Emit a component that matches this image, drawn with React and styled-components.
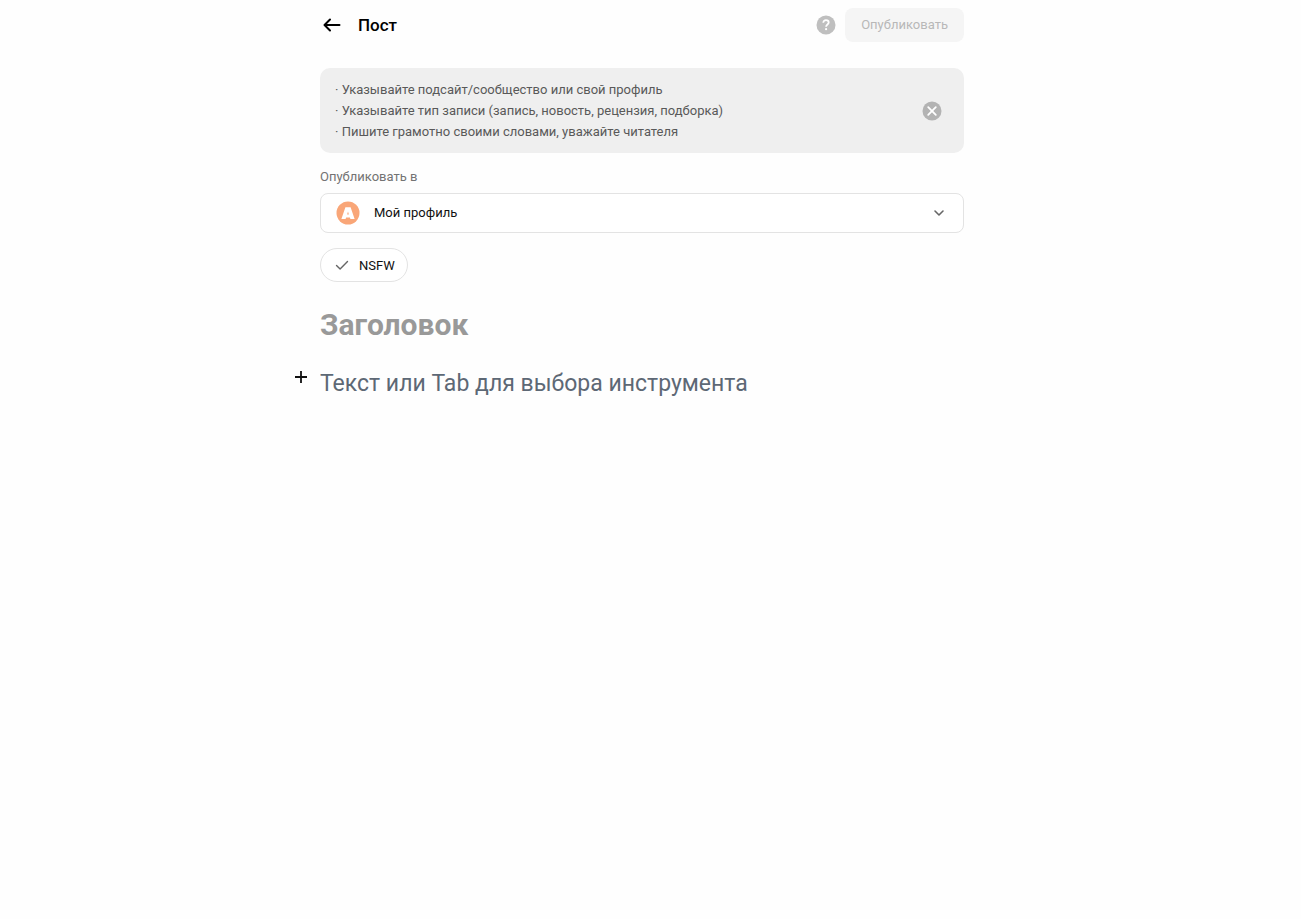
import React, { useState } from "react";
import styled, { createGlobalStyle } from "styled-components";

function App() {
  const [noticeOpen, setNoticeOpen] = useState(true);
  const [nsfw, setNsfw] = useState(false);

  return (
    <>
      <GlobalStyle />
      <Page>
        <Header>
          <IconButton type="button" aria-label="Назад">
            <BackIcon />
          </IconButton>
          <PageTitle>Пост</PageTitle>
          <IconButton type="button" aria-label="Помощь">
            <HelpIcon />
          </IconButton>
          <PublishButton type="button" disabled>
            Опубликовать
          </PublishButton>
        </Header>

        {noticeOpen && (
          <Notice>
            <Rules>
              {rules.map((rule) => (
                <li key={rule}>· {rule}</li>
              ))}
            </Rules>
            <IconButton
              type="button"
              aria-label="Закрыть"
              onClick={() => setNoticeOpen(false)}
            >
              <CloseIcon />
            </IconButton>
          </Notice>
        )}

        <FieldLabel htmlFor="target">Опубликовать в</FieldLabel>
        <SelectBox>
          <AvatarIcon />
          <Select id="target" defaultValue="profile">
            <option value="profile">Мой профиль</option>
          </Select>
          <ChevronIcon />
        </SelectBox>

        <Chip>
          <ChipInput
            type="checkbox"
            checked={nsfw}
            onChange={(e) => setNsfw(e.target.checked)}
          />
          <CheckIcon />
          NSFW
        </Chip>

        <TitleInput placeholder="Заголовок" aria-label="Заголовок" />

        <Editor>
          <IconButton type="button" aria-label="Добавить блок">
            <PlusIcon />
          </IconButton>
          <TextInput
            rows={1}
            placeholder="Текст или Tab для выбора инструмента"
            aria-label="Текст"
          />
        </Editor>
      </Page>
    </>
  );
}

const rules = [
  "Указывайте подсайт/сообщество или свой профиль",
  "Указывайте тип записи (запись, новость, рецензия, подборка)",
  "Пишите грамотно своими словами, уважайте читателя",
];

// icon
const BackIcon = () => (
  <svg width="24" height="20" viewBox="0 0 24 20" fill="none">
    <path
      d="M19.5 10H5M10 4.5L4.5 10l5.5 5.5"
      stroke="#000"
      strokeWidth="2"
      strokeLinecap="round"
      strokeLinejoin="round"
    />
  </svg>
);

const HelpIcon = () => (
  <svg width="20" height="20" viewBox="0 0 20 20" fill="none">
    <circle cx="10" cy="10" r="9.5" fill="#bfbfbf" />
    <path
      d="M7.3 7.8c0-1.6 1.1-2.6 2.7-2.6s2.7 1 2.7 2.4c0 1.9-2.6 2-2.6 4.2"
      stroke="#fff"
      strokeWidth="1.8"
    />
    <circle cx="10.1" cy="14.2" r="1.1" fill="#fff" />
  </svg>
);

const CloseIcon = () => (
  <svg width="20" height="20" viewBox="0 0 20 20" fill="none">
    <circle cx="10" cy="10" r="9.5" fill="#b3b3b3" />
    <path
      d="M6.2 6.2l7.6 7.6M13.8 6.2l-7.6 7.6"
      stroke="#fff"
      strokeWidth="1.8"
      strokeLinecap="round"
    />
  </svg>
);

const AvatarIcon = () => (
  <svg width="24" height="24" viewBox="0 0 24 24">
    <circle cx="12" cy="12" r="11.5" fill="#f9a678" />
    <path
      d="M9.4 6.3h5.2L18.6 18h-4.2l-.5-1.6h-3.8L9.6 18H5.4zM12 10.4l-.9 3.2h1.8z"
      fill="#fff"
      fillRule="evenodd"
    />
  </svg>
);

const ChevronIcon = () => (
  <svg width="12" height="12" viewBox="0 0 12 12" fill="none">
    <path
      d="M2 4l4 4 4-4"
      stroke="#666"
      strokeWidth="1.6"
      strokeLinecap="round"
      strokeLinejoin="round"
    />
  </svg>
);

const CheckIcon = () => (
  <svg width="14" height="12" viewBox="0 0 14 12" fill="none">
    <path
      d="M1.5 6.5l3.6 3.6 7.4-7.6"
      stroke="#666"
      strokeWidth="1.4"
      strokeLinecap="round"
      strokeLinejoin="round"
    />
  </svg>
);

const PlusIcon = () => (
  <svg width="12" height="12" viewBox="0 0 12 12">
    <path d="M6 0v12M0 6h12" stroke="#111" strokeWidth="1.8" />
  </svg>
);

const GlobalStyle = createGlobalStyle`
  * {
    box-sizing: border-box;
  }
  body {
    margin: 0;
    padding-right: 17px;
    background: #fefefe;
    color: #111;
    font-family: Roboto, "Liberation Sans", sans-serif;
    font-size: 13px;
  }
  button, input, select, textarea {
    font-family: inherit;
    font-size: inherit;
  }
`;

const Page = styled.main`
  display: flex;
  flex-direction: column;
  max-width: 644px;
  margin: 0 auto;
`;

const Header = styled.header`
  display: flex;
  align-items: center;
  padding: 8px 0 10px;
`;

const IconButton = styled.button`
  display: flex;
  flex-shrink: 0;
  padding: 0;
  border: 0;
  background: none;
  cursor: pointer;
`;

const PageTitle = styled.h1`
  flex: 1;
  margin: 0 0 0 14px;
  color: #000;
  font-size: 17px;
  font-weight: 500;
  line-height: 24px;
`;

const PublishButton = styled.button`
  height: 34px;
  margin-left: 9px;
  padding: 0 16px 2px;
  border: 0;
  border-radius: 8px;
  background: #f5f5f5;
  color: #b8b8b8;
`;

const Notice = styled.section`
  display: flex;
  justify-content: space-between;
  align-items: center;
  margin: 16px 0;
  padding: 11px 22px 11px 15px;
  border-radius: 10px;
  background: #efefef;
`;

const Rules = styled.ul`
  margin: 0;
  padding: 0;
  list-style: none;
  color: #595959;
  line-height: 21px;
`;

const FieldLabel = styled.label`
  margin-bottom: 8px;
  color: #737373;
  line-height: 16px;
`;

const SelectBox = styled.div`
  display: flex;
  align-items: center;
  height: 40px;
  padding: 0 18px 0 15px;
  border: 1px solid #e3e3e3;
  border-radius: 8px;
  background: #fff;
`;

const Select = styled.select`
  flex: 1;
  height: 100%;
  padding: 0 0 2px 14px;
  border: 0;
  outline: 0;
  appearance: none;
  background: none;
  color: #111;
`;

const Chip = styled.label`
  display: flex;
  align-items: center;
  align-self: flex-start;
  gap: 10px;
  height: 34px;
  margin-top: 15px;
  padding: 0 12px 0 14px;
  border: 1px solid #e3e3e3;
  border-radius: 17px;
  background: #fff;
  cursor: pointer;
`;

const ChipInput = styled.input`
  position: absolute;
  opacity: 0;
`;

const TitleInput = styled.input`
  width: 100%;
  height: 40px;
  margin-top: 22px;
  padding: 0;
  border: 0;
  outline: 0;
  background: none;
  font-size: 30px;
  font-weight: 700;
  &::placeholder {
    color: #999;
  }
`;

const Editor = styled.div`
  display: flex;
  align-items: flex-start;
  gap: 13px;
  margin: 22px 0 0 -25px;
  ${IconButton} {
    margin-top: 5px;
  }
`;

const TextInput = styled.textarea`
  flex: 1;
  padding: 0;
  border: 0;
  outline: 0;
  resize: none;
  background: none;
  font-size: 23px;
  line-height: 36px;
  &::placeholder {
    color: #5d6875;
  }
`;

export default App;
